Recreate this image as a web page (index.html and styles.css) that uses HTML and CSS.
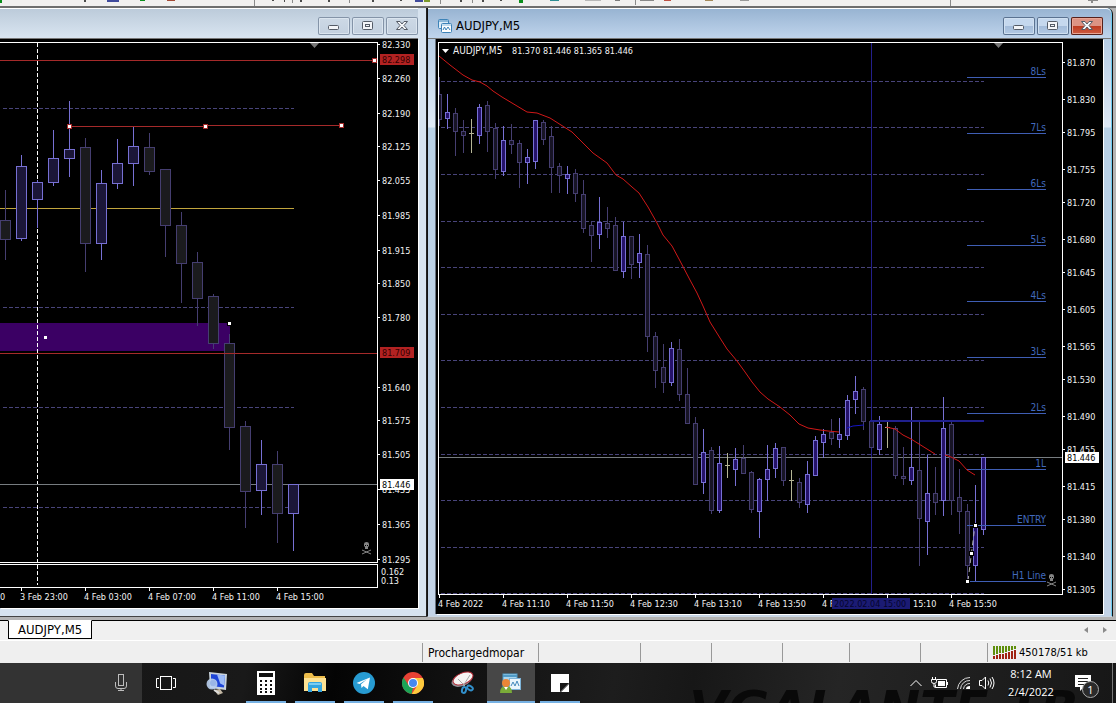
FILE: index.html
```html
<!DOCTYPE html>
<html lang="en">
<head>
<meta charset="utf-8">
<title>AUDJPY,M5</title>
<link rel="stylesheet" href="styles.css">
</head>
<body>
<header class="toolbar">
<svg class="toolbar-strip" aria-hidden="true">
<g fill="#4a4a4a"><rect x="84" width="2" height="2"/><rect x="272" width="2" height="1"/><rect x="284" width="1" height="2"/><rect x="300" width="2" height="2"/><rect x="328" width="2" height="2"/><rect x="372" width="2" height="2"/><rect x="400" width="2" height="1"/><rect x="460" width="2" height="2"/><rect x="482" width="2" height="2"/><rect x="500" width="2" height="1"/></g>
<g fill="#3f4a9c"><rect x="107" width="12" height="2"/><rect x="415" width="8" height="2"/></g>
<g fill="#0a8f1c"><rect x="0" width="2" height="3"/><rect x="140" width="5" height="1"/><rect x="519" width="4" height="3"/><rect x="424" width="6" height="2" fill="#7c9a2c"/></g>
<rect x="167" width="8" height="1" fill="#a34a35"/>
<rect x="550" width="9" height="1" fill="#2d8d93"/><rect x="585" width="16" height="1" fill="#b8b8b8"/><rect x="615" width="5" height="1" fill="#7b7b7b"/>
<g fill="#8a8a8a"><rect x="254" width="1" height="6"/><rect x="292" width="1" height="3"/><rect x="349" width="1" height="3"/><rect x="440" width="1" height="4"/><rect x="472" width="1" height="3"/><rect x="635" width="1" height="5"/><rect x="950" width="1" height="6"/><rect x="1088" width="10" height="1"/><rect x="1091" width="2" height="3"/></g>
<rect x="640" width="14" height="1" fill="#888"/><rect x="664" width="7" height="1" fill="#bc5144"/><rect x="705" width="8" height="1" fill="#a58a5a"/><rect x="740" width="9" height="1" fill="#999"/>
</svg>
</header>

<main class="workspace">
<section class="win" aria-label="Chart window">
<div class="titlebar">
<div class="win-buttons">
<button class="wb" aria-label="Minimize"><svg width="32" height="18"><rect x="10.500" y="8.500" width="10" height="4" rx="1"/></svg></button>
<button class="wb" aria-label="Restore"><svg width="32" height="18"><rect x="10.500" y="4.500" width="10" height="8" rx="1"/><rect x="13.500" y="7.500" width="4" height="2"/></svg></button>
<button class="wb" aria-label="Close"><svg width="32" height="18"><path d="M10.500 4.500h3.500l2 2.500 2-2.500h3.500l-3.500 4 3.500 4h-3.500l-2-2.500-2 2.500h-3.500l3.500-4z"/></svg></button>
</div>
</div>
<svg class="chart" id="chart-left" viewBox="0 39 418 569" role="img" aria-label="AUDJPY hourly chart"></svg>
</section>

<section class="win win-active" aria-label="AUDJPY,M5">
<div class="titlebar">
<svg class="win-icon" width="14" height="14" viewBox="0 0 14 14"><rect x=".5" y=".5" width="10" height="9" rx="1" fill="#dcecf8" stroke="#3d83b8"/><path d="M1 2h9" stroke="#3d83b8"/><rect x="3.500" y="4.500" width="10" height="9" rx="1" fill="#fff" stroke="#3d83b8"/><path d="M4 6h9" stroke="#86b8dc"/><path d="M5 11l1.500-3 1.500 3 2-3 2 3" fill="none" stroke="#3d83b8"/></svg>
<span class="win-title">AUDJPY,M5</span>
<div class="win-buttons">
<button class="wb" aria-label="Minimize"><svg width="32" height="18"><rect x="10.500" y="8.500" width="10" height="4" rx="1"/></svg></button>
<button class="wb" aria-label="Restore"><svg width="32" height="18"><rect x="10.500" y="4.500" width="10" height="8" rx="1"/><rect x="13.500" y="7.500" width="4" height="2"/></svg></button>
<button class="wb wb-close" aria-label="Close"><svg width="32" height="18"><path d="M10.500 4.500h3.500l2 2.500 2-2.500h3.500l-3.500 4 3.500 4h-3.500l-2-2.500-2 2.500h-3.500l3.500-4z"/></svg></button>
</div>
</div>
<svg class="chart" id="chart-right" viewBox="436 39 667 575" role="img" aria-label="AUDJPY five minute chart"></svg>
</section>
</main>

<nav class="tabs">
<button class="tab">AUDJPY,M5</button>
<div class="tab-scroll">
<button aria-label="Scroll left"><svg width="4" height="6"><path d="M4 0v6l-4-3z"/></svg></button>
<button aria-label="Scroll right"><svg width="4" height="6"><path d="M0 0v6l4-3z"/></svg></button>
</div>
</nav>

<div class="status">
<span class="s-help"></span><span class="s-profile">Prochargedmopar</span><span class="s-a"></span><span class="s-b"></span><span class="s-b"></span><span class="s-c"></span><span class="s-b"></span><span class="s-c"></span>
<span class="s-net"><svg width="24" height="13" shape-rendering="crispEdges"><path d="M1.500 0v9M4.500 0v8M7.500 0v7M10.500 0v7M13.500 0v6M16.500 0v5M19.500 0v4M22.500 0v3" stroke="#5f8f0c" stroke-width="2"/><path d="M1.500 10v3M4.500 9v4M7.500 8v5M10.500 8v5M13.500 7v6M16.500 6v7M19.500 5v8M22.500 4v9" stroke="#a02412" stroke-width="2"/></svg>450178/51 kb</span>
</div>

<footer class="taskbar">
<span class="wallpaper" aria-hidden="true">VGALANTE TB</span>
<div class="search"><svg width="12" height="18" viewBox="0 0 12 18" fill="none" stroke="#bdbdbd"><rect x="3.500" y=".5" width="5" height="11"/><path d="M.5 8v4q0 2.500 2.500 2.500h6q2.500 0 2.500-2.500v-4M6 14.500v2M3 16.500h6"/></svg></div>
<div class="apps">
<button class="app" aria-label="Task view"><svg width="20" height="16" fill="none" stroke="#fff"><rect x="4.500" y="1.500" width="11" height="13"/><path d="M3 3.500h-2.500v9h2.500M17 3.500h2.500v9h-2.500"/></svg></button>
<button class="app app-first" aria-label="Remote PC"><svg width="24" height="26" viewBox="0 0 24 26"><path d="M4 2l18 2-1 16-16-2z" fill="#c9d3dc"/><path d="M6 4l14 1.500-1 12-13-1.500z" fill="#1d45d8"/><path d="M12 4.600l8 .9-.8 10-4-2z" fill="#9dbcf7"/><path d="M9 20l6-1 3 4-5 2z" fill="#c4b9a5"/><circle cx="7" cy="14" r="5.500" fill="#b9cfee" opacity=".9"/><circle cx="8" cy="13" r="3" fill="#9ab6e6"/><path d="M9 20l5 3" stroke="#ddd" stroke-width="2"/></svg></button>
<button class="app open" aria-label="Calculator"><svg width="18" height="24" shape-rendering="crispEdges"><path d="M0 0h18v24H0z" fill="#fff"/><path d="M2 2h14v4H2z" fill="#111"/><path d="M3 9h2v2H3zM8 9h2v2H8zM13 9h2v2h-2zM3 13h2v2H3zM8 13h2v2H8zM13 13h2v2h-2zM3 17h2v2H3zM8 17h2v2H8zM13 17h2v2h-2zM3 20h2v2H3zM8 20h2v2H8zM13 20h2v2h-2z" fill="#111"/></svg></button>
<button class="app open" aria-label="File Explorer"><svg width="22" height="20"><path d="M0 2q0-2 2-2h6l2 3h11v15H0z" fill="#edbd4b"/><path d="M0 5h22v13H0z" fill="#fde293"/><path d="M4 19v-8q0-2 2-2h10q2 0 2 2v8h-4v-4H8v4z" fill="#33a5df"/><path d="M5 10h12v2H5z" fill="#7bcdf0"/></svg></button>
<button class="app open" aria-label="Telegram"><svg width="22" height="22"><circle cx="11" cy="11" r="11" fill="#279bd2"/><path d="M3.500 11L17 5.500l-2.200 11.800-4.300-3.200-2 2-.5-3.800 6-5-7.500 4.600z" fill="#fff"/></svg></button>
<button class="app open" aria-label="Google Chrome"><svg width="22" height="22"><circle cx="11" cy="11" r="11" fill="#e74235"/><path d="M1.500 5.500L6.700 13.500 11 16l-1.500 6A11 11 0 0 1 1.500 5.500z" fill="#1ca457"/><path d="M11 6h9.800A11 11 0 0 1 9.800 22L15 14z" fill="#fdca3d"/><circle cx="11" cy="11" r="5" fill="#fff"/><circle cx="11" cy="11" r="4" fill="#4688ef"/></svg></button>
<button class="app" aria-label="Snipping Tool"><svg width="24" height="24" fill="none"><ellipse cx="12" cy="9" rx="11" ry="6" transform="rotate(-22 12 9)" fill="#8e8e94"/><ellipse cx="13" cy="7.500" rx="10.500" ry="5.500" transform="rotate(-22 13 7.500)" fill="#f5f3f2" stroke="#b52b37"/><path d="M13 15l7-11M15 15l-7-7" stroke="#a7a7a7"/><ellipse cx="14" cy="19" rx="2" ry="3" stroke="#318fca" stroke-width="2" transform="rotate(15 14 19)"/><ellipse cx="20" cy="17" rx="3" ry="2" stroke="#318fca" stroke-width="2" transform="rotate(30 20 17)"/></svg></button>
<button class="app active" aria-label="MetaTrader"><svg width="22" height="22"><rect x="3" y="2" width="14" height="13" fill="#aad6ef" stroke="#4f9bc8"/><path d="M3 4h14" stroke="#4f9bc8" stroke-width="2"/><rect x="9.500" y="6.500" width="11" height="11" fill="#eaf5fc" stroke="#7db3d8"/><path d="M11 14l2-4 2 4 2-5 2 5" stroke="#4389bc" fill="none"/><path d="M0 21q0-7 6-7t6 7z" fill="#7aac38"/><circle cx="6" cy="11" r="4" fill="#ea8637"/><path d="M4 15l2 3 2-3" fill="#fff"/></svg></button>
<button class="app open" aria-label="Sticky Notes"><svg width="18" height="18"><path d="M0 0h18v9l-9 9H0z" fill="#fff"/><path d="M9 18v-9h9z" fill="#171717"/><path d="M10 18l8-8v8z" fill="#fff"/></svg></button>
</div>
<div class="tray">
<button aria-label="Show hidden icons"><svg width="12" height="8" fill="none" stroke="#fff"><path d="M.5 7L6 1.500 11.500 7"/></svg></button>
<button aria-label="Battery"><svg width="17" height="14" fill="none" stroke="#fff"><path d="M6 3.500h9.500v8h-11v-3M16.500 6v3M1.500 1v2M4.500 1v2M.5 3.500h5v2q0 2-2.500 2t-2.500-2zM3 8v3h2"/><path d="M7 5h7v5H7z" fill="#fff" stroke="none"/></svg></button>
<button aria-label="Wireless"><svg width="13" height="14" fill="none" stroke="#d8d8d8"><path d="M.5 13A12.500 12.500 0 0 1 13 1.500M3.500 13A9 9 0 0 1 13 4.500M6.500 13A6 6 0 0 1 13 7.500" /><path d="M9 13q0-3 4-3v3z" fill="#fff" stroke="none"/></svg></button>
<button aria-label="Volume"><svg width="16" height="14" fill="none" stroke="#fff"><path d="M.5 4.500h2.500L6.500 1v12L3 9.500H.500zM9 4.500q1.500 2.500 0 5M11 2.500q3 4.500 0 9M13 1q4 6 0 12"/></svg></button>
<div class="clock"><time>8:12 AM</time><time>2/4/2022</time></div>
<button class="notify" aria-label="Notifications"><svg width="17" height="17"><path d="M0 0h16v12H9l-4 4v-4H0z" fill="#fff"/><path d="M3 3.500h10M3 6.500h10M3 9.500h7" stroke="#222"/></svg><span class="count">1</span></button>
<span class="show-desktop"></span>
</div>
</footer>
<script src="chart.js"></script>
</body>
</html>
```
FILE: styles.css
```css
* { box-sizing: border-box; }
body {
  margin: 0;
  min-height: 100vh;
  display: flex;
  flex-direction: column;
  background: #efefef;
  font-family: "DejaVu Sans Condensed", "DejaVu Sans", sans-serif;
  font-stretch: condensed;
  font-size: 12px;
  color: #000;
  overflow-x: hidden;
}
button { font: inherit; color: inherit; background: none; border: 0; padding: 0; }
svg { display: block; }

.toolbar { height: 8px; background: #f1f0ef; border-bottom: 2px solid #6e6e6e; }
.toolbar-strip { width: 100%; height: 6px; }

.workspace {
  flex: 1;
  display: grid;
  grid-template-columns: minmax(0, 427fr) minmax(0, 686fr);
  align-items: start;
  padding-right: 3px;
  background: #b4b4b4;
}
.win {
  padding: 0 8px 8px 0;
  border-right: 1px solid #222;
  border-bottom: 1px solid #444;
  background: #d7e3ef;
}
.win-active {
  padding: 0 9px 2px 8px;
  border-left: 1px solid #111;
  border-right: 1px solid #111;
  border-bottom: 1px solid #c9d5e2;
  border-top-right-radius: 6px;
  box-shadow: inset -1px 0 #6cc9ee;
  background: linear-gradient(#a9c4e0 0, #dfe9f5 119px, #b9d1e6 120px, #c3d3e6 100%);
}
.titlebar {
  display: flex;
  align-items: center;
  height: 31px;
  padding-top: 4px;
  border-top: 1px solid #fff;
  background: linear-gradient(#bccbda, #d9e5f1);
  border-bottom: 1px solid #777;
}
.win-active .titlebar {
  margin: 0 -8px;
  padding: 4px 8px 0;
  background: linear-gradient(#98b4d2, #bfd4ec);
  border-top-right-radius: 5px;
}
.win-icon { margin: 0 4px 0 2px; }
.win-title, .tab { font-size: 13px; }
.win-buttons { display: flex; gap: 2px; margin-left: auto; }
.wb {
  width: 32px;
  height: 18px;
  border-radius: 2px;
  box-shadow: inset 0 0 0 1px #8494a8, inset 0 0 0 2px #dbe5ef;
  background: linear-gradient(#cdd9e6, #c3d0df);
}
.wb svg { fill: #f3f5f8; stroke: #545b66; }
.win-active .wb {
  box-shadow: inset 0 0 0 1px #5a7291, inset 0 0 0 2px #d0e0f1;
  background: linear-gradient(#c5d8ee 50%, #a3bcda 50%, #b5cbe6);
}
.win-active .wb-close {
  box-shadow: inset 0 0 0 1px #55201b, inset 0 0 0 2px #e9a594;
  background: linear-gradient(#dc9384 50%, #bd3a20 50%, #d06045);
}
.chart {
  width: 100%;
  height: auto;
  background: #000;
  box-shadow: 1px 1px #fff, -1px 0 #68727e;
  font-size: 9px;
}
.chart text { fill: #f2f2f2; }
.chart .symbol { font-size: 10px; }
.chart .level-text { fill: #4169bd; text-anchor: end; font-size: 10px; }
.chart .dark { fill: #000; }
.chart .on-red { fill: #330000; }
.chart .on-blue { fill: #05052e; }
.frame { fill: none; stroke: #fff; }
.grid { stroke: #48447a; stroke-dasharray: 4 2; }
.up { stroke: #7770d4; fill: #1b1638; }
.down { stroke: #453e70; fill: #1b1b1e; }
.m5 .up { fill: #25126a; }
.m5 .down { fill: #171425; }
.doji { stroke: #b5b596; }
.level { stroke: #3f5eb4; }
.ma { fill: none; stroke: #d01818; }
.price-line { stroke: #777c80; }
.skull { fill: none; stroke: #858585; }

.tabs {
  display: flex;
  justify-content: space-between;
  height: 21px;
  padding-left: 8px;
  border-top: 1px solid #000;
  border-bottom: 1px solid #fff;
  background: #f0f0f0;
}
.tab { height: 19px; padding: 0 9px; margin-top: -1px; background: #fff; border: 1px solid #000; border-top-color: #fff; }
.tab-scroll { display: flex; gap: 15px; align-items: center; padding: 0 9px 2px 0; }
.tab-scroll svg { fill: #8a8a8a; }

.status { display: flex; height: 22px; padding: 2px 0 1px; background: #efefef; }
.status > span { border-left: 1px solid #999; flex: 0 1 auto; line-height: 20px; white-space: nowrap; }
.status > .s-help { flex: 1; border-left: 0; }
.s-profile { width: 116px; padding-left: 5px; }
.s-a { width: 102px; }
.s-b { width: 71px; }
.s-c { width: 67px; }
.s-net { width: 129px; padding-left: 4px; display: flex; align-items: center; gap: 3px; font-size: 11px; }

.taskbar {
  position: relative;
  overflow: hidden;
  display: flex;
  height: 40px;
  background: linear-gradient(100deg, #151515 0, #191919 22%, #040404 30%, #101010 40%, #1d1d1d 55%, #171717 62%, #252525 75%, #171717 100%);
  color: #fff;
}
.wallpaper {
  position: absolute;
  right: 38px;
  top: 21px;
  font: italic bold 50px/50px "DejaVu Sans", sans-serif;
  color: #090909;
  white-space: pre;
}
.search { width: 142px; background: #333; display: flex; align-items: center; justify-content: flex-end; padding-right: 15px; }
.apps { position: relative; display: flex; gap: 1px; }
.app { position: relative; width: 48px; height: 40px; display: flex; align-items: center; justify-content: center; }
.app-first { margin-left: 2px; }
.open::after, .active::after { content: ""; position: absolute; left: 4px; right: 4px; bottom: 0; height: 2px; background: #76b1e3; }
.active { background: #474747; }
.active::after { left: 0; right: 0; }
.tray { position: relative; margin-left: auto; display: flex; align-items: center; gap: 9px; height: 40px; }
.tray button { flex: none; }
.clock { display: flex; flex-direction: column; align-items: center; width: 54px; font: 11px/18px "Open Sans", sans-serif; }
.notify { position: relative; margin-left: 8px; width: 28px; }
.count {
  position: absolute;
  left: 7px;
  top: 6px;
  width: 17px;
  height: 17px;
  border: 1px solid #aaa;
  border-radius: 50%;
  background: #2b2b2b;
  font: 11px/15px "Open Sans", sans-serif;
  text-align: center;
}
.show-desktop { width: 4px; height: 40px; border-left: 1px solid #777; }
```
FILE: chart.js
```js
// Candles are [high, body top, body bottom, low, kind].
const hourly = [
  [190,220,239,259,'d'],[155,166,238,240,'u'],[180,182,199,227,'u'],[130,158,182,185,'u'],
  [101,149,158,176,'u'],[138,147,243,271,'d'],[170,183,243,259,'u'],[139,163,183,188,'u'],
  [127,146,163,185,'u'],[133,147,171,174,'d'],[169,169,225,256,'d'],[212,225,263,302,'d'],
  [252,262,298,325,'d'],[294,296,343,348,'d'],[334,343,427,449,'d'],[421,426,491,527,'d'],
  [440,464,490,514,'u'],[451,464,513,542,'d'],[484,484,513,550,'u']
];
const fiveMinute = [
  [77,94,119,125,'d'],[94,112,118,128,'u'],[108,113,131,155,'d'],[120,131,135,152,'d'],
  [119,133,133,153,'j'],[104,107,135,143,'u'],[101,105,131,151,'d'],[123,128,169,178,'d'],
  [126,140,171,175,'u'],[124,140,144,153,'d'],[140,143,162,187,'d'],[149,157,162,183,'u'],
  [120,120,161,168,'u'],[120,122,139,144,'d'],[126,136,167,192,'d'],[163,166,175,192,'d'],
  [166,174,178,193,'u'],[169,173,193,201,'d'],[180,194,228,232,'d'],[222,225,235,261,'d'],
  [197,222,234,248,'u'],[207,223,228,237,'d'],[217,225,270,270,'d'],[222,236,271,277,'u'],
  [236,236,264,278,'d'],[234,253,262,277,'u'],[245,254,336,351,'d'],[332,336,370,387,'d'],
  [344,367,382,392,'d'],[342,348,382,385,'u'],[339,349,394,400,'d'],[368,394,423,423,'d'],
  [417,423,484,484,'d'],[429,452,482,493,'u'],[447,450,510,513,'d'],[446,463,510,512,'u'],
  [453,465,465,478,'j'],[448,459,469,485,'u'],[445,458,473,473,'d'],[471,472,509,512,'d'],
  [478,479,511,537,'u'],[445,469,479,500,'u'],[443,448,468,477,'u'],[447,447,480,485,'d'],
  [470,480,480,501,'j'],[478,482,502,507,'d'],[461,474,504,512,'u'],[436,440,475,475,'u'],
  [429,434,442,457,'u'],[419,432,438,444,'d'],[418,434,439,447,'u'],[395,400,435,439,'u'],
  [376,391,399,413,'u'],[387,389,421,429,'d'],[421,421,447,447,'d'],[416,424,449,454,'u'],
  [422,427,427,448,'j'],[426,428,475,478,'d'],[447,476,478,484,'d'],[407,467,480,484,'u'],
  [421,470,518,565,'d'],[455,493,521,554,'u'],[467,493,502,514,'d'],[397,428,500,515,'u'],
  [421,424,500,514,'d'],[469,497,511,533,'d'],[504,511,565,581,'d'],[485,527,565,581,'u'],
  [457,457,529,534,'u']
];

const hline = (x1, x2, y, cls, extra = '') => `<path class="${cls}" d="M${x1} ${y + 0.5}H${x2}" ${extra}/>`;
const vline = (x, y1, y2, cls, extra = '') => `<path class="${cls}" d="M${x + 0.5} ${y1}V${y2}" ${extra}/>`;
const text = (x, y, value, cls = '') => `<text x="${x}" y="${y}" class="${cls}">${value}</text>`;
const box = (x, y, w, h, fill, extra = '') => `<rect x="${x}" y="${y}" width="${w}" height="${h}" fill="${fill}" ${extra}/>`;
const handle = (x, y, edge = '#000') => box(x - 1.5, y - 1.5, 4, 4, '#fff', `stroke="${edge}"`);

function candles(list, start, step, half) {
  return list.map(([high, top, bottom, low, kind], i) => {
    const x = start + i * step;
    if (kind === 'j') return vline(x, high, low, 'doji') + hline(x - 2, x + 3, top, 'doji');
    const cls = kind === 'u' ? 'up' : 'down';
    return vline(x, high, low + 1, cls) +
      `<rect class="${cls}" x="${x - half + 0.5}" y="${top + 0.5}" width="${half * 2}" height="${Math.max(bottom - top, 2)}"/>`;
  }).join('');
}
function prices(list, axis) {
  return list.map(([y, value]) => hline(axis, axis + 3, y, 'frame') + text(axis + 5, y + 4, value)).join('');
}
function skull(x, y) {
  return `<g class="skull" transform="translate(${x} ${y})"><path d="M2 4V2q0-2 2.500-2t2.500 2v2l-1 1v2H3V5z" fill="#858585" stroke="none"/><path d="M0 8l9 4M9 8l-9 4"/><path d="M3 3.500h1M5 3.500h1" stroke="#000"/></g>`;
}
const crisp = content => `<g shape-rendering="crispEdges">${content}</g>`;

document.getElementById('chart-left').innerHTML =
  crisp(
    box(0, 323, 230, 28, '#3b0064') +
    [108, 307, 407, 507].map(y => hline(3, 294, y, 'grid')).join('') +
    hline(0, 294, 208, '', 'stroke="#c1a53d"') +
    vline(37, 43, 585, '', 'stroke="#fff" stroke-dasharray="4 2"') +
    hline(0, 377, 484, 'price-line') +
    candles(hourly, 5, 16, 5) +
    hline(0, 376, 60, '', 'stroke="#a52a2a"') + handle(374, 60, '#a52a2a') +
    hline(69, 205, 126, '', 'stroke="#a52a2a"') + hline(205, 341, 125, '', 'stroke="#a52a2a"') +
    handle(69, 126, '#a52a2a') + handle(205, 126, '#a52a2a') + handle(341, 125, '#a52a2a') +
    hline(0, 378, 353, '', 'stroke="#a52a2a"') +
    handle(45, 337, '#3b0064') + handle(229, 323) +
    '<path class="frame" d="M0 42.5H377.5V562.5H0M0 564.5H377.5V587.5H0"/>' +
    [21, 85, 149, 213, 277].map(x => vline(x, 587, 591, 'frame')).join('')
  ) +
  '<path d="M310 43h9l-4.500 5z" fill="#777"/>' +
  prices([[44,'82.330'],[78,'82.260'],[113,'82.190'],[146,'82.125'],[180,'82.055'],[215,'81.985'],[250,'81.915'],[283,'81.850'],[317,'81.780'],[387,'81.640'],[420,'81.575'],[454,'81.505'],[489,'81.435'],[524,'81.365'],[559,'81.295']], 377) +
  box(380, 54, 34, 11, '#b22222') + text(382, 63, '82.298', 'on-red') +
  box(380, 347, 34, 11, '#b22222') + text(382, 356, '81.709', 'on-red') +
  box(380, 479, 34, 11, '#fff') + text(382, 488, '81.446', 'dark') +
  text(381, 575, '0.162') + text(381, 584, '0.13') + text(0, 600, '0') +
  ['3 Feb 23:00', '4 Feb 03:00', '4 Feb 07:00', '4 Feb 11:00', '4 Feb 15:00'].map((label, i) => text(20 + i * 64, 600, label)).join('') +
  skull(362, 542);

const levels = ['8Ls', '7Ls', '6Ls', '5Ls', '4Ls', '3Ls', '2Ls', '1L', 'ENTRY', 'H1 Line'];
const right = document.getElementById('chart-right');
right.classList.add('m5');
right.innerHTML =
  '<clipPath id="plot"><rect x="438" y="42" width="624" height="552"/></clipPath>' +
  crisp(
    '<g clip-path="url(#plot)">' +
    [81, 127, 174, 221, 267, 314, 360, 407, 454, 500, 547, 593].map(y => hline(441, 984, y, 'grid')).join('') +
    vline(871, 43, 594, '', 'stroke="#231f8c"') +
    hline(439, 1062, 457, 'price-line') +
    candles(fiveMinute, 439, 8, 2) + '</g>' +
    levels.map((_, i) => hline(967, 1046, 77 + i * 56, 'level')).join('') +
    '<path d="M870 421H984" stroke="#20208e" stroke-width="2"/>' +
    '<path class="frame" d="M438.5 594V42.5H1062.5V594.5H438"/>' +
    Array.from({ length: 9 }, (_, i) => vline(439 + i * 64, 594, 598, 'frame')).join('')
  ) +
  '<path class="ma" d="M439 56L450 65 463 75 472 80 480 82 487 86 493 91 502 97 527 112 537 113 550 118 572 132 593 153 607 163 616 175 623 179 632 187 639 193 648 207 657 223 663 235 672 246 679 259 690 280 697 293 703 306 710 322 720 338 727 349 737 361 745 372 752 382 760 392 768 399 780 407 790 415 799 424 808 428 820 430 828 431 839 432M886 427L895 429 903 435 911 439 919 444 935 454M945 455L951 457 959 461 967 470 975 475"/>' +
  '<path d="M847 428L853 426 864 425" fill="none" stroke="#1515c5"/>' +
  '<path d="M968 581L975 525" stroke="#aaa" stroke-dasharray="5 4"/>' +
  crisp(handle(967, 581) + handle(971, 553) + handle(975, 525)) +
  levels.map((label, i) => text(1046, 75 + i * 56, label, 'level-text')).join('') +
  '<path d="M994 43h9l-4.500 5z" fill="#777"/><path d="M442 49h7l-3.500 4z" fill="#fff"/>' +
  text(453, 54, 'AUDJPY,M5', 'symbol') + text(512, 54, '81.370 81.446 81.365 81.446') +
  prices([[62,'81.870'],[99,'81.830'],[132,'81.795'],[169,'81.755'],[202,'81.720'],[239,'81.680'],[272,'81.645'],[309,'81.605'],[346,'81.565'],[379,'81.530'],[416,'81.490'],[449,'81.455'],[486,'81.415'],[519,'81.380'],[556,'81.340'],[589,'81.305']], 1062) +
  box(1065, 452, 34, 11, '#fff') + text(1067, 461, '81.446', 'dark') +
  [[438,'4 Feb 2022'],[502,'4 Feb 11:10'],[566,'4 Feb 11:50'],[630,'4 Feb 12:30'],[694,'4 Feb 13:10'],[758,'4 Feb 13:50'],[822,'4 F'],[913,'15:10'],[949,'4 Feb 15:50']].map(([x, label]) => text(x, 607, label)).join('') +
  box(832, 598, 78, 11, '#1b1b74') + text(834, 607, '2022.02.04 15:00', 'on-blue') +
  skull(1047, 574);
```
